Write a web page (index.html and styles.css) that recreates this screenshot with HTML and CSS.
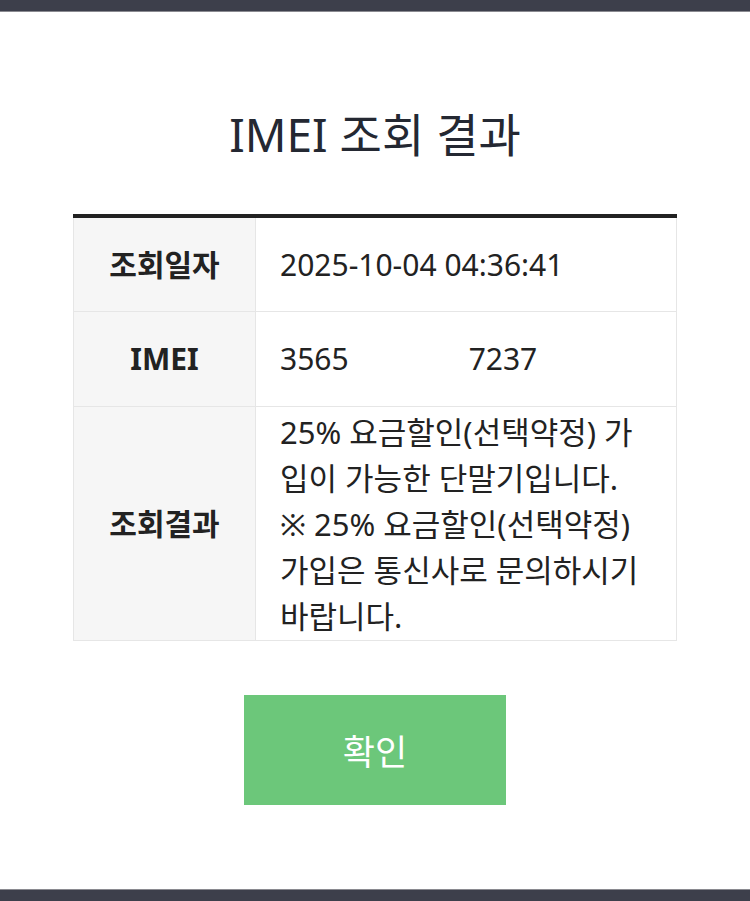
FILE: index.html
```html
<!DOCTYPE html>
<html lang="ko">
<head>
<meta charset="utf-8">
<link rel="stylesheet" href="styles.css">
</head>
<body>
<div class="topbar"></div>
<main class="content">
  <h1 class="title">IMEI 조회 결과</h1>
  <table class="result">
    <tr class="row-date">
      <th>조회일자</th>
      <td>2025-10-04 04:36:41</td>
    </tr>
    <tr class="row-imei">
      <th>IMEI</th>
      <td><span class="imei-a">3565</span><span class="imei-b">7237</span></td>
    </tr>
    <tr>
      <th>조회결과</th>
      <td class="multi">25% 요금할인(선택약정) 가입이 가능한 단말기입니다.<br>※ 25% 요금할인(선택약정) 가입은 통신사로 문의하시기 바랍니다.</td>
    </tr>
  </table>
  <div class="actions">
    <button class="confirm">확인</button>
  </div>
</main>
<div class="bottombar"></div>
</body>
</html>
```
FILE: styles.css
```css
html, body {
  margin: 0;
  padding: 0;
  background: #ffffff;
}
body {
  width: 750px;
  height: 901px;
  display: flex;
  flex-direction: column;
  font-family: "Noto Sans", "Noto Sans CJK KR", sans-serif;
  color: #222;
}
.topbar {
  height: 11px;
  background: #3d3f4b;
  border-bottom: 1px solid #8a8a90;
}
.content {
  flex: 1;
  display: flex;
  flex-direction: column;
  align-items: center;
}
.title {
  margin: 94px 0 0;
  font-size: 46px;
  font-weight: 400;
  line-height: 56px;
  color: #242832;
}
.result {
  margin-top: 52px;
  width: 604px;
  border-collapse: collapse;
  border-top: 4px solid #222;
  font-size: 30px;
}
.result th, .result td {
  border: 1px solid #e6e6e6;
  border-top: none;
  height: 93px;
  padding: 0 26px 0 24px;
  line-height: 46px;
  vertical-align: middle;
}
.result .row-imei th, .result .row-imei td {
  height: 94px;
}
.result tr + tr th, .result tr + tr td {
  border-top: 1px solid #e6e6e6;
}
.result th {
  width: 131px;
  padding: 0 25px;
  background: #f6f6f6;
  font-weight: 700;
  color: #222;
}
.result td {
  text-align: left;
  font-weight: 400;
  color: #222;
}
.result td.multi {
  padding-top: 2px;
  padding-bottom: 1px;
  font-size: 31px;
  word-break: break-all;
}
.imei-b {
  margin-left: 120px;
}
.actions {
  margin-top: 54px;
  display: flex;
  justify-content: center;
}
.confirm {
  width: 262px;
  height: 110px;
  border: none;
  background: #6cc77a;
  color: #fff;
  font-family: "Noto Sans", "Noto Sans CJK KR", sans-serif;
  font-size: 35px;
  font-weight: 400;
  padding: 0 0 2px;
}
.bottombar {
  height: 11px;
  background: #3d3f4b;
  border-top: 1px solid #8a8a90;
}
```
